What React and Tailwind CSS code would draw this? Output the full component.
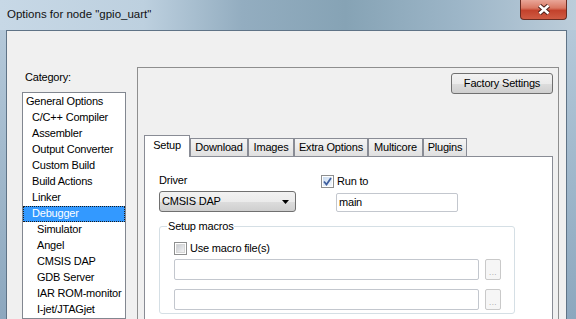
const categories = [
  ['General Options', 0],
  ['C/C++ Compiler', 1],
  ['Assembler', 1],
  ['Output Converter', 1],
  ['Custom Build', 1],
  ['Build Actions', 1],
  ['Linker', 1],
  ['Debugger', 1, true],
  ['Simulator', 2],
  ['Angel', 2],
  ['CMSIS DAP', 2],
  ['GDB Server', 2],
  ['IAR ROM-monitor', 2],
  ['I-jet/JTAGjet', 2],
];

const indent = ['pl-[2px]', 'pl-[8px]', 'pl-[13px]'];

const tabs = [
  ['Setup', 'w-[46px]'],
  ['Download', 'w-[58px]'],
  ['Images', 'w-[46px]'],
  ['Extra Options', 'w-[74px]'],
  ['Multicore', 'w-[55px]'],
  ['Plugins', 'w-[44px]'],
];

function Checkbox({ checked }) {
  return (
    <span className="w-[13px] h-[13px] shrink-0 border border-[#8e8f8f] bg-white flex items-center justify-center">
      {checked ? (
        <span className="w-[9px] h-[9px] bg-[linear-gradient(135deg,#cbdcf0,#f4f8fc)] flex items-center justify-center">
          <svg width="9" height="9" viewBox="0 0 9 9">
            <path d="M1 4.5 L3.5 7.5 L8 1" fill="none" stroke="#3f5f9f" strokeWidth="1.8" />
          </svg>
        </span>
      ) : (
        <span className="w-[9px] h-[9px] bg-[linear-gradient(135deg,#c9ccd1,#f3f3f3)] border border-[#d6d6d6]" />
      )}
    </span>
  );
}

function CloseButton() {
  return (
    <div className="mr-[9px] w-[47px] h-[20px] rounded-b-[4px] border border-t-0 border-[#6a2c22] bg-[linear-gradient(180deg,#e9a698_0%,#d97863_42%,#c3422c_55%,#cf5b43_100%)] flex items-center justify-center">
      <svg width="14" height="11" viewBox="0 0 14 11">
        <path d="M2.5 1.5 L11.5 9.5 M11.5 1.5 L2.5 9.5" stroke="#4a201a" strokeWidth="4.5" />
        <path d="M2.5 1.5 L11.5 9.5 M11.5 1.5 L2.5 9.5" stroke="#ffffff" strokeWidth="2.5" />
      </svg>
    </div>
  );
}

function BrowseButton() {
  return (
    <div className="ml-[6px] w-[16px] h-[21px] border border-[#c9c9c9] rounded-[2px] bg-[#f6f6f6] flex items-end justify-center pb-[2px]">
      <span className="text-[8px] leading-[8px] text-[#9a9a9a] tracking-[0.5px]">...</span>
    </div>
  );
}

export default function App() {
  return (
    <div className="w-[576px] h-[319px] overflow-hidden flex flex-col font-['Liberation_Sans',Arial,sans-serif] text-black bg-[linear-gradient(180deg,#b9ccdc_0%,#a4bbce_45%,#8ca7be_100%)]">
      {/* Title bar */}
      <div className="h-[30px] shrink-0 flex items-start justify-between bg-[linear-gradient(90deg,#c7d8e6_0%,#bdd0df_25%,#93adc0_42%,#86a3b5_60%,#9db6c8_80%,#bccdda_100%)]">
        <div className="pl-[7px] pt-[7px] text-[11.5px] leading-[14px] text-[#111]">
          Options for node "gpio_uart"
        </div>
        <CloseButton />
      </div>

      {/* Client area */}
      <div className="flex-1 min-h-0 ml-[6px] mr-[9px] border-t border-x border-[#5f7386] bg-[#f0f0f0] flex text-[11px] tracking-[-0.2px]">
        {/* Category column */}
        <div className="w-[130px] shrink-0 pl-[15px] pt-[40px] flex flex-col">
          <div className="pl-[3px] leading-[13px]">Category:</div>
          <div className="mt-[8px] w-[104px] flex-1 border border-[#828790] bg-white pt-[1px]">
            {categories.map(([name, level, selected]) => (
              <div
                key={name}
                className={`h-[16px] leading-[13px] whitespace-nowrap border ${
                  selected
                    ? 'bg-[#3399ff] text-white border-dotted border-[#1b1b1b]'
                    : 'border-transparent'
                } ${indent[level]}`}
              >
                {name}
              </div>
            ))}
          </div>
        </div>

        {/* Options panel */}
        <div className="mt-[36px] w-[422px] shrink-0 border-t border-x border-[#8e8e8e] flex flex-col">
          <button className="self-end mt-[5px] mr-[5px] w-[102px] h-[21px] border border-[#707070] rounded-[3px] bg-[linear-gradient(180deg,#f2f2f2_0%,#ebebeb_50%,#dddddd_51%,#cfcfcf_100%)] text-[11px] tracking-[-0.2px]">
            Factory Settings
          </button>

          {/* Tabs */}
          <div className="mt-[41px] ml-[6px] h-[21px] flex items-end relative z-10">
            {tabs.map(([label, w], i) =>
              i === 0 ? (
                <div
                  key={label}
                  className={`${w} h-[22px] -mb-[1px] border-x border-t border-[#898c95] bg-white flex items-start justify-center pt-[3px] leading-[13px]`}
                >
                  {label}
                </div>
              ) : (
                <div
                  key={label}
                  className={`${w} h-[18px] border-x border-t border-[#898c95] bg-[linear-gradient(180deg,#f4f4f4_0%,#ebebeb_50%,#dfdfdf_100%)] flex items-center justify-center leading-[13px] whitespace-nowrap`}
                >
                  {label}
                </div>
              )
            )}
          </div>

          {/* Tab page */}
          <div className="flex-1 ml-[6px] mr-[5px] border-t border-x border-[#898c95] bg-white pl-[14px]">
            <div className="flex items-start">
              <div className="w-[137px] pt-[17px]">
                <div className="leading-[13px]">Driver</div>
                <div className="mt-[4px] h-[21px] border border-[#707070] rounded-[3px] bg-[linear-gradient(180deg,#f2f2f2_0%,#ebebeb_50%,#dddddd_51%,#cfcfcf_100%)] flex items-center justify-between pl-[2px] pr-[6px]">
                  <span>CMSIS DAP</span>
                  <svg width="7" height="4" viewBox="0 0 7 4">
                    <path d="M0 0 H7 L3.5 4 Z" fill="#000" />
                  </svg>
                </div>
              </div>
              <div className="ml-[25px] pt-[18px]">
                <div className="flex items-center gap-[3px] h-[13px]">
                  <Checkbox checked />
                  <span className="leading-[13px]">Run to</span>
                </div>
                <div className="mt-[5px] ml-[15px] w-[122px] h-[19px] border border-[#c3c7ce] rounded-[2px] bg-white flex items-center pl-[2px]">
                  main
                </div>
              </div>
            </div>

            <fieldset className="mt-[8px] w-[356px] border border-[#d5dfe5] rounded-[3px] pl-[7px] pb-[3px]">
              <legend className="px-[1px] leading-[13px]">Setup macros</legend>
              <div className="ml-[7px] pt-[9px]">
                <div className="flex items-center gap-[3px] h-[13px]">
                  <Checkbox />
                  <span className="leading-[13px]">Use macro file(s)</span>
                </div>
                <div className="mt-[4px] flex">
                  <div className="w-[305px] h-[21px] border border-[#c3c7ce] rounded-[2px] bg-white" />
                  <BrowseButton />
                </div>
                <div className="mt-[9px] flex">
                  <div className="w-[305px] h-[21px] border border-[#c3c7ce] rounded-[2px] bg-white" />
                  <BrowseButton />
                </div>
              </div>
            </fieldset>
          </div>
        </div>
      </div>
    </div>
  );
}
